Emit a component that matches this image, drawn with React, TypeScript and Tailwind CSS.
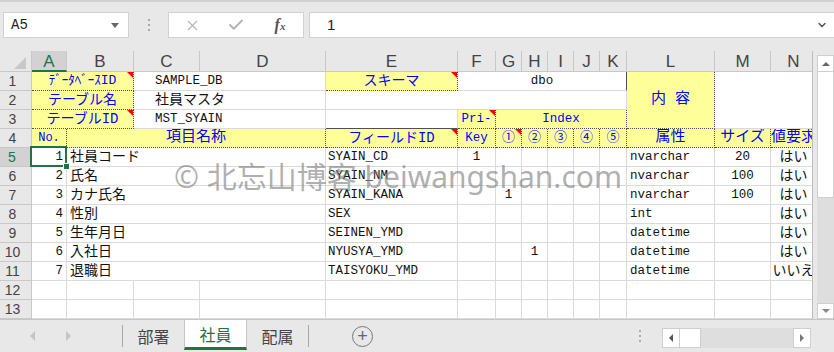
import React from "react";
import { X, Check, ChevronDown } from "lucide-react";

const mono = "font-['Liberation_Mono','Noto_Sans_CJK_JP',monospace]";
const cell = "relative flex items-center overflow-hidden whitespace-nowrap border-r border-b border-[#dadada] bg-white text-[#111]";
const yel = "relative flex items-center justify-center overflow-hidden whitespace-nowrap border-r border-b border-dotted border-[#505050] bg-[#ffff99] text-[#0000ff]";
const colHdr = "flex items-center justify-center pt-[2px] border-r border-b border-[#c8c8c8] text-[17px] leading-[18px] text-[#444] font-['Liberation_Sans',sans-serif]";
const rowHdr = "flex items-center justify-center pr-[6px] border-r border-b border-[#c8c8c8] text-[14px] text-[#444] font-['Liberation_Sans',sans-serif]";

type Row = {
  no: number;
  name: string;
  id: string;
  pk: string;
  idx: string[];
  type: string;
  size: string;
  req: string;
};

const rows: Row[] = [
  { no: 1, name: "社員コード", id: "SYAIN_CD", pk: "1", idx: ["", "", "", "", ""], type: "nvarchar", size: "20", req: "はい" },
  { no: 2, name: "氏名", id: "SYAIN_NM", pk: "", idx: ["", "", "", "", ""], type: "nvarchar", size: "100", req: "はい" },
  { no: 3, name: "カナ氏名", id: "SYAIN_KANA", pk: "", idx: ["1", "", "", "", ""], type: "nvarchar", size: "100", req: "はい" },
  { no: 4, name: "性別", id: "SEX", pk: "", idx: ["", "", "", "", ""], type: "int", size: "", req: "はい" },
  { no: 5, name: "生年月日", id: "SEINEN_YMD", pk: "", idx: ["", "", "", "", ""], type: "datetime", size: "", req: "はい" },
  { no: 6, name: "入社日", id: "NYUSYA_YMD", pk: "", idx: ["", "1", "", "", ""], type: "datetime", size: "", req: "はい" },
  { no: 7, name: "退職日", id: "TAISYOKU_YMD", pk: "", idx: ["", "", "", "", ""], type: "datetime", size: "", req: "いいえ" },
];

const letters = ["B", "C", "D", "E", "F", "G", "H", "I", "J", "K", "L", "M", "N"];

function Tri() {
  return <span className="absolute top-0 right-0 border-t-[6px] border-l-[6px] border-t-[#ff0000] border-l-transparent" />;
}

function Grid() {
  return (
    <div className="grid grid-cols-[32px_35px_67px_66px_126px_132px_38px_26px_26px_26px_26px_27px_88px_56px_46px] grid-rows-[21px_repeat(13,19px)] w-[817px]">
      {/* column headers */}
      <div className="relative border-r border-b border-[#c8c8c8]">
        <span className="absolute right-[5px] bottom-[2px] border-b-[12px] border-l-[12px] border-b-[#c8c8c8] border-l-transparent" />
      </div>
      <div className="flex items-center justify-center pt-[3px] border-r border-b-2 border-r-[#c8c8c8] border-b-[#217346] bg-[#d2d2d2] text-[17px] leading-[18px] text-[#217346] font-['Liberation_Sans',sans-serif]">A</div>
      {letters.map((l) => (
        <div key={l} className={colHdr}>{l}</div>
      ))}

      {/* row 1 */}
      <div className={rowHdr}>1</div>
      <div className={`${yel} col-span-2 text-[13px] ${mono}`}>ﾃﾞｰﾀﾍﾞｰｽID<Tri /></div>
      <div className={`${cell} col-span-2 pl-[21px] text-[12.5px] ${mono}`}>SAMPLE_DB</div>
      <div className={`${yel} text-[14px] ${mono}`}>スキーマ<Tri /></div>
      <div className={`${cell} col-span-6 justify-center border-r-[#505050] border-r-dotted text-[12.5px] ${mono}`}>dbo</div>
      <div className={`${yel} row-span-3 text-[15px] ${mono}`}>内 容</div>
      <div className={`${cell} col-span-2 row-span-3`} />

      {/* row 2 */}
      <div className={rowHdr}>2</div>
      <div className={`${yel} col-span-2 text-[14px] ${mono}`}>テーブル名</div>
      <div className={`${cell} col-span-2 pl-[21px] text-[14px] ${mono}`}>社員マスタ</div>
      <div className={`${cell} col-span-7`} />

      {/* row 3 */}
      <div className={rowHdr}>3</div>
      <div className={`${yel} col-span-2 text-[14px] ${mono}`}>テーブルID<Tri /></div>
      <div className={`${cell} col-span-2 pl-[21px] text-[12.5px] ${mono}`}>MST_SYAIN</div>
      <div className={`${cell} border-b-[#505050] border-b-dotted`} />
      <div className={`${yel} text-[12.5px] ${mono}`}>Pri-<Tri /></div>
      <div className={`${yel} col-span-5 text-[12.5px] ${mono}`}>Index</div>

      {/* row 4 */}
      <div className={rowHdr}>4</div>
      <div className={`${yel} text-[12px] ${mono}`}>No.</div>
      <div className={`${yel} col-span-3 text-[15px] ${mono}`}>項目名称</div>
      <div className={`${yel} text-[14px] ${mono}`}>フィールドID<Tri /></div>
      <div className={`${yel} text-[12.5px] ${mono}`}>Key</div>
      {["①", "②", "③", "④", "⑤"].map((c, i) => (
        <div key={c} className={`${yel} text-[13px] ${mono}`}>
          {c}
          {i === 0 && <Tri />}
        </div>
      ))}
      <div className={`${yel} text-[15px] ${mono}`}>属性</div>
      <div className={`${yel} text-[15px] ${mono}`}>サイズ</div>
      <div className={`${yel} text-[15px] ${mono}`}>値要求</div>

      {/* data rows */}
      {rows.map((r) => (
        <React.Fragment key={r.no}>
          {r.no === 1 ? (
            <div className="flex items-center justify-center pr-[6px] border-r-2 border-b border-r-[#217346] border-b-[#c8c8c8] bg-[#d2d2d2] text-[14px] text-[#217346] font-['Liberation_Sans',sans-serif]">5</div>
          ) : (
            <div className={rowHdr}>{r.no + 4}</div>
          )}
          <div className={`${cell} justify-end pr-[3px] text-[12.5px] ${mono} ${r.no === 1 ? "overflow-visible z-10" : ""}`}>
            {r.no}
            {r.no === 1 && (
              <>
                <span className="absolute -left-[2px] -top-[2px] -right-[1px] -bottom-[1px] border-2 border-[#217346]" />
                <span className="absolute -right-[4px] -bottom-[4px] w-[7px] h-[7px] bg-[#217346] border border-white" />
              </>
            )}
          </div>
          <div className={`${cell} col-span-3 pl-[3px] text-[14px] ${mono}`}>{r.name}</div>
          <div className={`${cell} pl-[2px] text-[12.5px] ${mono}`}>{r.id}</div>
          <div className={`${cell} justify-center text-[12.5px] ${mono}`}>{r.pk}</div>
          {r.idx.map((v, i) => (
            <div key={i} className={`${cell} justify-center text-[12.5px] ${mono}`}>{v}</div>
          ))}
          <div className={`${cell} pl-[3px] text-[12.5px] ${mono}`}>{r.type}</div>
          <div className={`${cell} justify-center text-[12.5px] ${mono}`}>{r.size}</div>
          <div className={`${cell} justify-center text-[14px] ${mono}`}>{r.req}</div>
        </React.Fragment>
      ))}

      {/* empty rows */}
      {[12, 13].map((n) => (
        <React.Fragment key={n}>
          <div className={rowHdr}>{n}</div>
          {Array.from({ length: 14 }).map((_, i) => (
            <div key={i} className={cell} />
          ))}
        </React.Fragment>
      ))}
    </div>
  );
}

export default function App() {
  return (
    <div className="relative w-[834px] h-[352px] overflow-hidden bg-[#e8e8e8] select-none">
      {/* formula bar */}
      <div className="h-[51px] border-t-2 border-[#d0d0d0]">
        <div className="flex items-stretch h-[26px] mt-[10px]">
          <div className="ml-[3px] w-[126px] bg-white border border-[#d2d2d2] flex items-center justify-between pl-[7px] pr-[9px]">
            <span className={`text-[14px] text-[#222] ${mono}`}>A5</span>
            <span className="border-t-[5px] border-x-[4px] border-t-[#666] border-x-transparent" />
          </div>
          <div className="w-[39px] flex flex-col items-center justify-center gap-[3px]">
            <span className="w-[2px] h-[2px] bg-[#aaa]" />
            <span className="w-[2px] h-[2px] bg-[#aaa]" />
            <span className="w-[2px] h-[2px] bg-[#aaa]" />
          </div>
          <div className="w-[136px] bg-white border border-[#d2d2d2] flex items-center pl-[1px]">
            <span className="w-[44px] flex justify-center"><X size={17} strokeWidth={1.6} color="#b4b4b4" /></span>
            <span className="w-[44px] flex justify-center"><Check size={18} strokeWidth={2.6} color="#b4b4b4" /></span>
            <span className="w-[44px] flex justify-center font-['Liberation_Serif',serif] italic font-bold text-[16px] text-[#555]">
              f<span className="text-[11px] mt-[5px]">x</span>
            </span>
          </div>
          <div className="ml-[5px] flex-1 bg-white border border-r-0 border-[#d2d2d2] flex items-center justify-between pl-[17px] pr-[6px]">
            <span className="text-[15px] text-[#222] font-['Liberation_Sans',sans-serif]">1</span>
            <ChevronDown size={12} strokeWidth={3} color="#555" />
          </div>
        </div>
      </div>

      {/* sheet area */}
      <div className="flex h-[268px]">
        <div className="w-[813px] overflow-hidden border-r border-[#bdbdbd]">
          <Grid />
        </div>
        <div className="w-[21px] pl-[4px] pt-[4px] flex flex-col">
          <div className="h-[17px] bg-white border border-[#cfcfcf] flex items-center justify-center">
            <span className="border-b-[4px] border-x-[4px] border-b-[#666] border-x-transparent" />
          </div>
          <div className="h-[126px] bg-white border-x border-b border-[#cfcfcf]" />
          <div className="flex-1 bg-[#dedede]" />
          <div className="h-[16px] bg-white border border-[#cfcfcf] flex items-center justify-center">
            <span className="border-t-[4px] border-x-[4px] border-t-[#888] border-x-transparent" />
          </div>
        </div>
      </div>

      {/* sheet tabs */}
      <div className="h-[33px] border-t border-[#c6c6c6] flex items-stretch">
        <div className="w-[122px] flex items-center">
          <span className="ml-[30px] border-r-[5px] border-y-[5px] border-r-[#c4c4c4] border-y-transparent" />
          <span className="ml-[31px] border-l-[5px] border-y-[5px] border-l-[#c4c4c4] border-y-transparent" />
        </div>
        <div className="w-px h-[22px] mt-[5px] bg-[#a8a8a8]" />
        <div className="w-[61px] flex items-center justify-center text-[16px] text-[#444] font-['Noto_Sans_CJK_JP',sans-serif]">部署</div>
        <div className="w-[63px] h-[30px] bg-white border-x border-[#c6c6c6] border-b-[3px] border-b-[#217346] flex items-center justify-center text-[16px] text-[#217346] font-['Noto_Sans_CJK_JP',sans-serif]">社員</div>
        <div className="w-[61px] flex items-center justify-center text-[16px] text-[#444] font-['Noto_Sans_CJK_JP',sans-serif]">配属</div>
        <div className="w-px h-[22px] mt-[5px] bg-[#a8a8a8]" />
        <div className="ml-[43px] self-center w-[21px] h-[21px] rounded-full border-[1.5px] border-[#777] flex items-center justify-center text-[#666] text-[18px] leading-none font-['Liberation_Sans',sans-serif]">+</div>
        <div className="flex-1" />
        <div className="flex flex-col justify-center gap-[3px]">
          <span className="w-[2px] h-[2px] bg-[#aaa]" />
          <span className="w-[2px] h-[2px] bg-[#aaa]" />
          <span className="w-[2px] h-[2px] bg-[#aaa]" />
        </div>
        <div className="ml-[21px] mr-[23px] mt-[8px] h-[20px] w-[149px] flex">
          <div className="w-[18px] bg-white border border-[#cfcfcf] flex items-center justify-center">
            <span className="border-r-[4px] border-y-[4px] border-r-[#555] border-y-transparent" />
          </div>
          <div className="w-[21px] bg-white border-y border-r border-[#cfcfcf]" />
          <div className="flex-1 bg-[#dedede]" />
          <div className="w-[18px] bg-white border border-[#cfcfcf] flex items-center justify-center">
            <span className="border-l-[4px] border-y-[4px] border-l-[#777] border-y-transparent" />
          </div>
        </div>
      </div>

      {/* watermark */}
      <div className="absolute left-[174px] top-[157px] text-[30px] leading-[40px] whitespace-nowrap text-[#7a7a7a]/60 font-['Noto_Sans','Noto_Sans_CJK_SC',sans-serif] pointer-events-none">
        © 北忘山博客 beiwangshan.com
      </div>
    </div>
  );
}
